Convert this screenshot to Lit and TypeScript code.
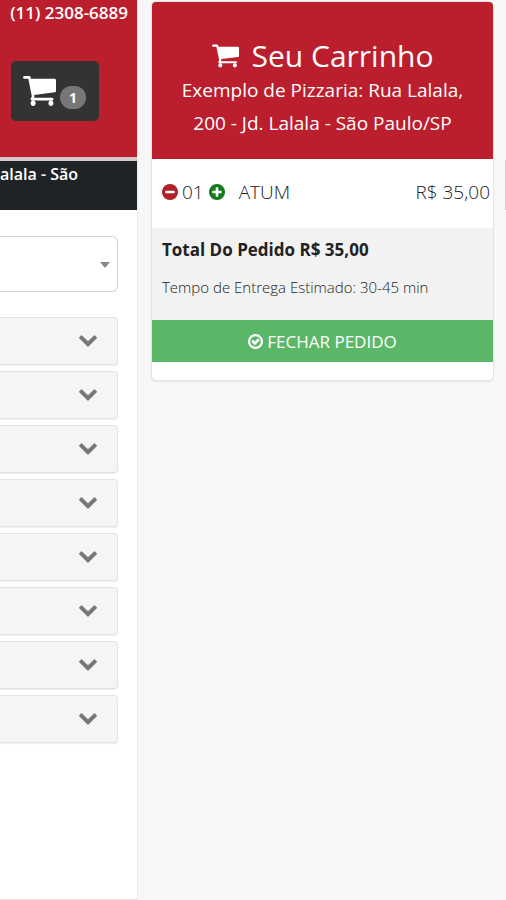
import { LitElement, html, css, svg } from "lit";
import { customElement, state } from "lit/decorators.js";

const DISC =
  "q0 209-103 385.5t-279.5 279.5-385.5 103-385.5-103-279.5-279.5-103-385.5 103-385.5 279.5-279.5 385.5-103 385.5 103 279.5 279.5 103 385.5z";

const cart = svg`<path d="M640 1536q0 52-38 90t-90 38-90-38-38-90 38-90 90-38 90 38 38 90zm896 0q0 52-38 90t-90 38-90-38-38-90 38-90 90-38 90 38 38 90zm128-1088v512q0 24-16.5 42.5t-40.5 21.5l-1044 122q13 60 13 70 0 16-24 64h920q26 0 45 19t19 45-19 45-45 19h-1024q-26 0-45-19t-19-45q0-11 8-31.5t16-36 21.5-40 15.5-29.5l-177-823h-204q-26 0-45-19t-19-45 19-45 45-19h256q16 0 28.5 6.5t19.5 15.5 13 24.5 8 26 5.5 29.5 4.5 26h1201q26 0 45 19t19 45z"/>`;
const chevron = svg`<path d="M1683 808l-742 741q-19 19-45 19t-45-19l-742-741q-19-19-19-45.5t19-45.5l166-165q19-19 45-19t45 19l531 531 531-531q19-19 45-19t45 19l166 165q19 19 19 45.5t-19 45.5z"/>`;
const minus = svg`<path d="M1344 960v-128q0-26-19-45t-45-19h-768q-26 0-45 19t-19 45v128q0 26 19 45t45 19h768q26 0 45-19t19-45zm320-64${DISC}"/>`;
const plus = svg`<path d="M1344 960v-128q0-26-19-45t-45-19h-256v-256q0-26-19-45t-45-19h-128q-26 0-45 19t-19 45v256h-256q-26 0-45 19t-19 45v128q0 26 19 45t45 19h256v256q0 26 19 45t45 19h128q26 0 45-19t19-45v-256h256q26 0 45-19t19-45zm320-64${DISC}"/>`;
const check = svg`<path d="M1299 813l-422 422q-19 19-45 19t-45-19l-294-294q-19-19-19-45t19-45l102-102q19-19 45-19t45 19l147 147 275-275q19-19 45-19t45 19l102 102q19 19 19 45t-19 45zm141 83q0-148-73-273t-198-198-273-73-273 73-198 198-73 273 73 273 198 198 273 73 273-73 198-198 73-273zm224 0${DISC}"/>`;

@customElement("app-root")
export class AppRoot extends LitElement {
  @state() private quantity = 1;

  static styles = css`
    :host {
      display: block;
      font-family: "Open Sans", "Liberation Sans", sans-serif;
      color: #222;
    }
    * {
      box-sizing: border-box;
    }
    h1,
    p {
      margin: 0;
      font-weight: inherit;
    }
    button,
    select {
      font: inherit;
      cursor: pointer;
    }
    svg {
      display: block;
      flex: none;
      fill: currentColor;
    }
    .page {
      display: grid;
      grid-template-columns: 138px minmax(0, 1fr) 1px;
      min-height: 100vh;
      background: #f7f7f7;
      overflow: hidden;
    }
    .menu {
      background: #fff;
      border-right: 1px solid #ececec;
      border-bottom: 1px solid #efd9dc;
      overflow: hidden;
    }
    .top {
      display: flex;
      flex-direction: column;
      height: 161px;
      background: #bb1e2d;
      border-bottom: 4px solid #d5cacb;
    }
    .phone {
      align-self: flex-end;
      padding-right: 9px;
      color: #fff;
      text-decoration: none;
      font-size: 17px;
      font-weight: 600;
      line-height: 26px;
      white-space: nowrap;
    }
    .cart-button {
      display: flex;
      align-items: center;
      gap: 4px;
      width: 88px;
      height: 60px;
      margin: 35px 0 0 11px;
      padding: 0 12px;
      border: 0;
      border-radius: 5px;
      background: #333;
      color: #fff;
    }
    .count {
      width: 26px;
      margin-top: 12px;
      border-radius: 12px;
      background: #777;
      font-size: 14px;
      font-weight: 700;
      line-height: 23px;
      text-align: center;
    }
    .address {
      height: 49px;
      background: #202326;
      color: #fff;
      font-size: 16px;
      font-weight: 600;
      line-height: 26px;
      white-space: nowrap;
    }
    .list {
      display: flex;
      flex-direction: column;
      gap: 6px;
      padding: 26px 19px 0 0;
    }
    .picker {
      position: relative;
      margin-bottom: 19px;
    }
    .picker select {
      display: block;
      width: 100%;
      height: 56px;
      border: 1px solid #d2d2d2;
      border-left: 0;
      border-radius: 0 6px 6px 0;
      background: #fff;
      appearance: none;
    }
    .caret {
      position: absolute;
      top: 26px;
      right: 8px;
      border: 5px solid transparent;
      border-top: 6px solid #888;
      border-bottom: 0;
      pointer-events: none;
    }
    .group {
      display: flex;
      align-items: center;
      justify-content: flex-end;
      height: 48px;
      padding: 0 20px 1px 0;
      border: 1px solid #e4e4e4;
      border-left: 0;
      border-radius: 0 4px 4px 0;
      box-shadow: 0 1px 1px #eee;
      background: #f5f5f5;
      color: #777;
    }
    .side {
      padding: 1px 11px 0 13px;
    }
    .card {
      padding-bottom: 18px;
      border: 1px solid #e4e4e4;
      border-radius: 5px;
      box-shadow: 0 1px 1px #e6e6e6;
      background: #fff;
      overflow: hidden;
    }
    .head {
      padding: 35px 24px 19px;
      background: #bb1e2d;
      color: #fff;
      text-align: center;
      font-size: 19px;
      font-weight: 500;
      line-height: 33px;
    }
    .title {
      display: flex;
      align-items: center;
      justify-content: center;
      gap: 13px;
      font-size: 30px;
      font-weight: 400;
      line-height: 37px;
    }
    .item {
      display: flex;
      align-items: center;
      height: 69px;
      padding: 0 3px 4px 10px;
      font-size: 19px;
      font-weight: 300;
    }
    .step {
      padding: 0;
      border: 0;
      background: none;
      color: #b0202a;
    }
    .more {
      color: #107a1c;
    }
    .quantity {
      padding: 0 5px 0 4px;
    }
    .name {
      flex: 1;
      padding-left: 14px;
    }
    .total {
      height: 92px;
      padding: 8px 10px 0;
      background: #f2f2f2;
    }
    .sum {
      font-size: 17px;
      font-weight: 700;
      line-height: 28px;
    }
    .time {
      margin-top: 10px;
      font-size: 15px;
      font-weight: 300;
      line-height: 26px;
    }
    .close {
      display: flex;
      align-items: center;
      justify-content: center;
      gap: 4px;
      width: 100%;
      height: 42px;
      padding: 0;
      border: 0;
      background: #5bb768;
      color: #fff;
      font-size: 17px;
      font-weight: 500;
    }
    .next {
      height: 50px;
      margin-top: 160px;
      background: #d0d0d0;
    }
  `;

  private change(step: number) {
    this.quantity = Math.max(1, this.quantity + step);
  }

  render() {
    const price = `R$ ${35 * this.quantity},00`;
    return html`
      <div class="page">
        <main class="menu">
          <header class="top">
            <a class="phone" href="tel:+551123086889">(11) 2308-6889</a>
            <button class="cart-button" aria-label="Carrinho">
              <svg width="33" height="30" viewBox="0 256 1664 1408" preserveAspectRatio="none">${cart}</svg>
              <span class="count">${this.quantity}</span>
            </button>
          </header>
          <p class="address">alala - São</p>
          <div class="list">
            <div class="picker">
              <select aria-label="Categoria"><option></option></select>
              <span class="caret"></span>
            </div>
            ${Array.from(
              { length: 8 },
              (_, i) => html`
                <button class="group" aria-label="Categoria ${i + 1}">
                  <svg width="18" height="12" viewBox="90 533 1612 1035">${chevron}</svg>
                </button>
              `
            )}
          </div>
        </main>
        <aside class="side">
          <section class="card">
            <header class="head">
              <h1 class="title">
                <svg width="27" height="24" viewBox="0 256 1664 1408">${cart}</svg>
                Seu Carrinho
              </h1>
              <p>Exemplo de Pizzaria: Rua Lalala, 200 - Jd. Lalala - São Paulo/SP</p>
            </header>
            <div class="item">
              <button class="step" aria-label="Remover" @click=${() => this.change(-1)}>
                <svg width="16" height="16" viewBox="128 128 1536 1536">${minus}</svg>
              </button>
              <span class="quantity">${String(this.quantity).padStart(2, "0")}</span>
              <button class="step more" aria-label="Adicionar" @click=${() => this.change(1)}>
                <svg width="16" height="16" viewBox="128 128 1536 1536">${plus}</svg>
              </button>
              <span class="name">ATUM</span>
              <span>${price}</span>
            </div>
            <div class="total">
              <p class="sum">Total Do Pedido ${price}</p>
              <p class="time">Tempo de Entrega Estimado: 30-45 min</p>
            </div>
            <button class="close">
              <svg width="15" height="15" viewBox="128 128 1536 1536">${check}</svg>
              FECHAR PEDIDO
            </button>
          </section>
        </aside>
        <div class="next"></div>
      </div>
    `;
  }
}
